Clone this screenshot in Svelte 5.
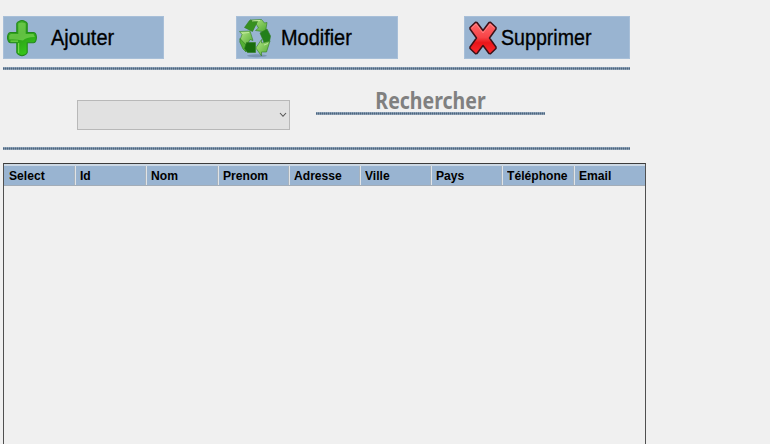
<script>
  const columns = ['Select', 'Id', 'Nom', 'Prenom', 'Adresse', 'Ville', 'Pays', 'Téléphone', 'Email'];
</script>

<main>
  <div class="toolbar">
    <button class="add">
      <svg width="32" height="38" viewBox="0 0 32 38">
        <defs>
          <linearGradient id="plus" x1="0" y1="0" x2="0.5" y2="1">
            <stop offset="0" stop-color="#48b82e" />
            <stop offset=".5" stop-color="#2a9c17" />
            <stop offset="1" stop-color="#35c51a" />
          </linearGradient>
        </defs>
        <path d="M10.800 4.500Q11 3 13 2.500Q16 .5 19 2.500Q21 3 21.200 4.500V13.500H27.500Q29 13.500 29.800 15.300Q31 18.500 29.800 21.700Q29 23.700 27.500 23.700H21.200V33.500Q21 35 19 35.800Q16 37.500 13 35.800Q11 35 10.800 33.500V23.700H4.500Q3 23.700 2.200 21.700Q.8 18.500 2.200 15.300Q3 13.500 4.500 13.500H10.800Z" fill="url(#plus)" stroke="#23891b" stroke-width="1.100" stroke-linejoin="round" />
        <path d="M12.300 15V4.500Q16 2.300 19.700 4.500V15H27.500L28.800 18Q20 18 17 21.500Q10 20 3.200 20.500V16.500Q4 15 5 15Z" fill="#8edc64" opacity=".55" />
        <path d="M12.600 24V34M4.500 22.200H12" stroke="#9bed68" stroke-width="1.200" fill="none" opacity=".65" />
      </svg>
      <span>Ajouter</span>
    </button>
    <button class="edit">
      <svg width="34" height="40" viewBox="0 0 34 40">
        <defs>
          <linearGradient id="leaf" x1="0" y1="0" x2="1" y2="1">
            <stop offset="0" stop-color="#b6e789" />
            <stop offset="1" stop-color="#4da82e" />
          </linearGradient>
        </defs>
        <ellipse cx="19" cy="37.800" rx="10" ry="1.500" fill="#66809b" opacity=".6" />
        <g stroke="#2f7c1e" stroke-width=".6" stroke-linejoin="round">
          <path d="M12 2L23.500 1.500L26.500 5L29 4.500L27.500 14L17.500 12.500L20.500 10L17 4Z" fill="url(#leaf)" />
          <path d="M11.500 2.500L19.500 3.500L14.500 13.500L6.500 9.500Z" fill="#37901f" />
          <path d="M1.500 13.500L12 13L15 22.500L12 21.500L8.500 28L2 22L4 16.500Z" fill="url(#leaf)" />
          <path d="M2 20.500L8.500 27.500L8 34L5 31L1.800 24Z" fill="#55b033" />
          <path d="M8.500 24.500H17.500V34.500H9.500L6.500 30.500Z" fill="#196d0e" />
          <path d="M22 15L29 11L32.500 18L31.500 24L26 24.500Z" fill="#23801a" />
          <path d="M25 24.800L32 23L28.500 34H23.500V38L17.800 30L23.500 21.500V25Z" fill="url(#leaf)" />
        </g>
        <path d="M14 3L22 2.500M4 15.200L11 14.500M26 27L30 25.500" stroke="#d8f6b6" stroke-width="1" opacity=".7" />
      </svg>
      <span>Modifier</span>
    </button>
    <button class="remove">
      <svg width="28" height="34" viewBox="0 0 28 34">
        <defs>
          <linearGradient id="cross" x1="0" y1="0" x2="0" y2="1">
            <stop offset="0" stop-color="#ff6b6d" />
            <stop offset=".48" stop-color="#f74346" />
            <stop offset=".65" stop-color="#e9161a" />
            <stop offset="1" stop-color="#fb292d" />
          </linearGradient>
        </defs>
        <path d="M6.500 1.200L8 1.500L14 9.500L20 1.500L21.500 1.200L27 6.500V8L20.500 17L27 26V27.500L21.500 32.800L20 32.500L14 24.500L8 32.500L6.500 32.800L1 27.500V26L7.500 17L1 8V6.500Z" fill="url(#cross)" stroke="#3b1117" stroke-width="1.500" stroke-linejoin="round" />
        <path d="M2.700 7L7 3L14 12L21 3L25.300 7" fill="none" stroke="#ffa1a1" stroke-width=".9" opacity=".6" />
      </svg>
      <span>Supprimer</span>
    </button>
  </div>
  <div class="rule"></div>
  <div class="search">
    <div class="combo" role="combobox" aria-expanded="false" aria-controls="results" tabindex="0">
      <svg width="8" height="6" viewBox="0 0 8 6"><path d="M1 1L4 4.300L7 1" fill="none" stroke="#555" stroke-width="1.100" /></svg>
    </div>
    <div class="field">
      <span>Rechercher</span>
      <div class="rule"></div>
    </div>
  </div>
  <div class="rule"></div>
  <div class="grid" id="results">
    <div class="head">
      {#each columns as column}
        <div class="cell"><span>{column}</span></div>
      {/each}
    </div>
  </div>
</main>

<style>
  :global(body) { background: #f0f0f0; }
  main {
    box-sizing: border-box;
    width: 770px;
    height: 444px;
    padding: 16px 0 0 3px;
    overflow: hidden;
    background: #f0f0f0;
    font-family: "Liberation Sans", Arial, sans-serif;
    color: #000;
  }
  .toolbar {
    display: flex;
    justify-content: space-between;
    width: 627px;
    height: 43px;
    margin-bottom: 8px;
  }
  button {
    display: flex;
    align-items: center;
    box-sizing: border-box;
    height: 43px;
    margin: 0;
    padding: 0;
    border: 1px solid #a8bfd8;
    background: #99b4d1;
    color: #000;
    font: 22px/42px "Liberation Sans", Arial, sans-serif;
  }
  button svg { flex: none; }
  button span {
    transform: scaleX(.905);
    transform-origin: left;
    -webkit-text-stroke: .35px #000;
    white-space: nowrap;
  }
  .add { width: 161px; padding-left: 2px; }
  .add span { margin-left: 13px; }
  .edit { width: 162px; margin-left: 6px; padding-left: 1px; }
  .edit span { margin-left: 9px; }
  .remove { width: 166px; padding-left: 4px; }
  .remove span { margin-left: 4px; transform: scaleX(.892); }
  .rule {
    width: 627px;
    height: 3px;
    background:
      repeating-linear-gradient(90deg, transparent 0 1px, rgba(225, 235, 245, .3) 1px 2px),
      linear-gradient(#7188a0 0 1px, #4c6680 1px 2px, #71869c 2px 3px);
  }
  .search {
    display: flex;
    height: 77px;
  }
  .combo {
    display: flex;
    align-items: center;
    justify-content: flex-end;
    box-sizing: border-box;
    width: 213px;
    height: 30px;
    margin: 30px 0 0 74px;
    padding-right: 2px;
    border: 1px solid #b8b8b8;
    background: #e1e1e1;
  }
  .field {
    width: 229px;
    margin: 18px 0 0 26px;
    text-align: center;
  }
  .field span {
    display: block;
    height: 24px;
    font: bold 23.500px/24px "Noto Sans", Tahoma, sans-serif;
    color: #808080;
    transform: scaleX(.83);
  }
  .field .rule { width: 229px; }
  .grid {
    box-sizing: border-box;
    width: 643px;
    height: 290px;
    margin-top: 13px;
    border: 1px solid #505050;
    border-top: 1px solid #3c3c3c;
  }
  .head {
    display: flex;
    box-sizing: border-box;
    height: 22px;
    padding-left: 1px;
    border-top: 2px solid #ccd8e4;
    border-bottom: 1px solid #a3adb8;
    background: #99b4d1;
  }
  .cell {
    box-sizing: border-box;
    width: 71.200px;
    flex: none;
    padding-left: 4px;
    border-right: 1px solid #e0e3e5;
    box-shadow: inset -1px 0 #a6b3c0;
    font: bold 13.400px/19px "Liberation Sans", Arial, sans-serif;
  }
  .cell:last-child { width: 70px; border-right: 0; box-shadow: none; }
  .cell span {
    display: inline-block;
    transform: scaleX(.905);
    transform-origin: left;
  }
</style>
